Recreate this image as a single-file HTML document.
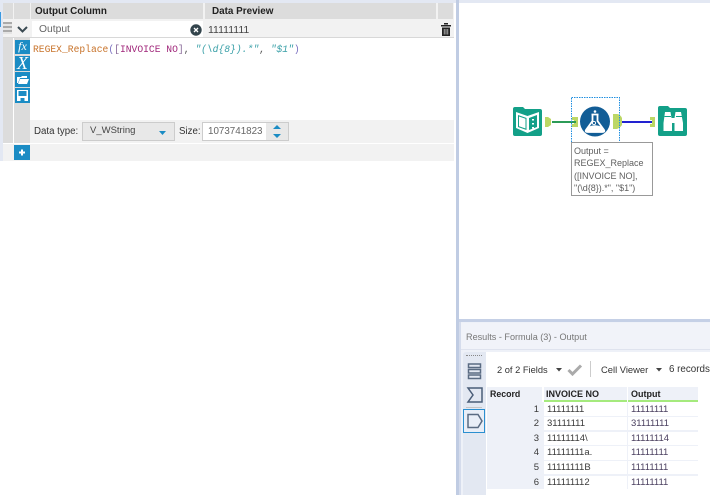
<!DOCTYPE html>
<html><head><meta charset="utf-8"><style>
html,body{margin:0;padding:0}
body{width:710px;height:495px;overflow:hidden;background:#fff;position:relative;font-family:"Liberation Sans",sans-serif;font-size:10px;color:#333}
.a{position:absolute;box-sizing:border-box;white-space:nowrap}
.b{font-weight:bold;color:#222}
.cell{position:absolute;background:#fff;line-height:14px;font-size:9.5px;color:#3a3a3a;padding-left:3px;box-sizing:border-box}
.r{background:#eef1f8;text-align:right;padding-right:3px;left:487px;width:55px}
.i{left:544px;width:83px}
.o{left:628px;width:70px;color:#4a3f5f}
.mono{font-family:"Liberation Mono",monospace;font-size:9.67px}
</style></head><body>
<div class="a" style="left:0;top:0;width:710px;height:3px;background:#e3e8f3"></div>
<div class="a" style="left:0;top:0;width:3px;height:161px;background:#e3e8f3"></div>
<div class="a" style="left:0;top:12px;width:1px;height:15px;background:#3a9ae0"></div>
<div class="a" style="left:3px;top:3px;width:451px;height:158px;background:#f2f2f2"></div>
<div class="a" style="left:3px;top:3px;width:10px;height:16px;background:#dcdcdc"></div>
<div class="a" style="left:14px;top:3px;width:16px;height:16px;background:#dcdcdc"></div>
<div class="a b" style="left:31px;top:3px;width:172px;height:16px;background:#dcdcdc;line-height:18px;padding-left:4px;font-size:9.9px">Output Column</div>
<div class="a b" style="left:205px;top:3px;width:231px;height:16px;background:#dcdcdc;line-height:18px;padding-left:7px;font-size:9.9px">Data Preview</div>
<div class="a" style="left:438px;top:3px;width:15px;height:16px;background:#dcdcdc"></div>
<div class="a" style="left:3px;top:22px;width:9px;height:12px;background:repeating-linear-gradient(#aaa 0 2px,#e4e4e4 2px 4px)"></div>
<svg class="a" style="left:16px;top:25px" width="13" height="9"><path d="M2 2l4.500 4.500L11 2" fill="none" stroke="#3a4a52" stroke-width="2"/></svg>
<div class="a" style="left:32px;top:21px;width:171px;height:16px;background:#fff;line-height:17px;padding-left:7px;color:#666;font-size:10.3px">Output</div>
<svg class="a" style="left:190px;top:24px" width="12" height="12"><circle cx="6" cy="6" r="5.700" fill="#33444c"/><path d="M4 4l4 4M8 4l-4 4" stroke="#fff" stroke-width="1.300"/></svg>
<div class="a" style="left:208px;top:21px;height:16px;line-height:18px;font-size:10.500px;color:#444">11111111</div>
<svg class="a" style="left:440px;top:22px" width="12" height="15"><path d="M4 2.500V1h4v1.500M1 3h10v1.500H1zM2 5.500h8V14H2z" fill="#222"/><path d="M4.200 7v5.500M6 7v5.500M7.800 7v5.500" stroke="#ddd" stroke-width=".7"/></svg>
<div class="a" style="left:3px;top:38px;width:451px;height:123px;background:#fff"></div>
<div class="a" style="left:3px;top:37px;width:451px;height:1px;background:#d8d8d8"></div>
<div class="a" style="left:3px;top:38px;width:10px;height:105px;background:#dcdcdc"></div>
<div class="a" style="left:14px;top:38px;width:16px;height:105px;background:#dcdcdc"></div>
<div class="a" style="left:15px;top:40px;width:15px;height:14px;background:#1b8cc4;color:#fff;font:italic 12px/13px 'Liberation Serif',serif;text-align:center">fx</div>
<div class="a" style="left:15px;top:56px;width:15px;height:15px;background:#1b8cc4;color:#fff;font:italic 18px/15px 'Liberation Serif',serif;text-align:center">X</div>
<div class="a" style="left:15px;top:72px;width:15px;height:15px;background:#1b8cc4"></div>
<svg class="a" style="left:15px;top:72px" width="15" height="15"><path d="M2 5h4l1-1h5v2H5L3 11H2zM5 7h9l-2 5H3z" fill="#fff"/></svg>
<div class="a" style="left:15px;top:88px;width:15px;height:15px;background:#1b8cc4"></div>
<svg class="a" style="left:15px;top:88px" width="15" height="15"><path d="M2 2h11v11H2z" fill="#fff"/><path d="M3.500 3h8v5h-8zM5.500 10h4v3h-4z" fill="#1b8cc4"/></svg>
<div class="a mono" style="left:33px;top:43px;height:14px;line-height:14px;color:#c8732a">REGEX_Replace<span style="color:#7a6fc0">(</span><span style="color:#8a6a9a">[</span><span style="color:#a0267a">INVOICE NO</span><span style="color:#8a6a9a">]</span><span style="color:#555">,</span> <span style="color:#3aa0a8;font-style:italic">"(\d{8}).*"</span><span style="color:#555">,</span> <span style="color:#3aa0a8;font-style:italic">"$1"</span><span style="color:#7a6fc0">)</span></div>
<div class="a" style="left:30px;top:120px;width:424px;height:23px;background:#f2f2f2"></div>
<div class="a" style="left:34px;top:120px;height:24px;line-height:24px;font-size:9.7px;color:#333">Data type:</div>
<div class="a" style="left:82px;top:122px;width:93px;height:19px;background:#e8e8e8;border:1px solid #ccc;line-height:16px;padding-left:7px;font-size:9.5px;color:#444">V_WString</div>
<svg class="a" style="left:158px;top:130px" width="9" height="6"><path d="M1 1h7L4.500 5z" fill="#1b8cc4"/></svg>
<div class="a" style="left:179px;top:120px;height:24px;line-height:24px;font-size:9.7px;color:#333">Size:</div>
<div class="a" style="left:202px;top:122px;width:87px;height:19px;background:#fff;border:1px solid #ccc;line-height:17px;padding-left:5px;font-size:9.8px;color:#666">1073741823</div>
<div class="a" style="left:266px;top:123px;width:22px;height:17px;background:#e8e8e8"></div>
<svg class="a" style="left:272px;top:124px" width="10" height="15"><path d="M1 5L5 1l4 4zM1 10h8l-4 4z" fill="#1b8cc4"/></svg>
<div class="a" style="left:3px;top:144px;width:451px;height:17px;background:#f2f2f2"></div>
<div class="a" style="left:14px;top:145px;width:16px;height:15px;background:#1b8cc4"></div>
<svg class="a" style="left:14px;top:145px" width="16" height="15"><path d="M5 7.500h6M8 4.500v6" stroke="#fff" stroke-width="2"/></svg>

<div class="a" style="left:456px;top:0;width:3px;height:495px;background:#c0cce3"></div>
<div class="a" style="left:459px;top:3px;width:251px;height:315px;background:#fff"></div>
<div class="a" style="left:459px;top:319px;width:251px;height:3px;background:#c5d0e6"></div>

<!-- tools -->
<svg class="a" style="left:505px;top:95px" width="205" height="100">
<path d="M8 14q0-2 2-2h8l2 2h15q2 0 2 2v23q0 2-2 2H10q-2 0-2-2z" fill="#13a088"/>
<path d="M11 17l11.500 4 11.500-4v16l-11.500 5-11.500-5z" fill="#fff"/><path d="M24 23l8-3v12l-8 3z" fill="#13a088"/>
<path d="M13 20l8.500 3v12l-8.500-3z" fill="#13a088"/><path d="M14 21.500l6.500 2.300v9.700l-6.500-2.300z" fill="#fff"/>
<path d="M28 24v1.500M28 28v1.500M28 32v1.500" stroke="#fff" stroke-width="2"/>
<path d="M47 27h26" stroke="#2c9b57" stroke-width="2"/>
<path d="M40 22h3l3 2v6l-3 2h-3z" fill="#bcd765"/>
<path d="M67 22h6v10h-6v-3h2v-4h-2z" fill="#bcd765"/>
<path d="M69 27h2" stroke="#2c9b57" stroke-width="2"/>
<path d="M117 27h30" stroke="#2222d0" stroke-width="2"/>
<path d="M108 19h4q3 0 5 4v7q-2 3-5 4h-4z" fill="#bcd765"/>
<path d="M145 22h5v10h-5v-3h2v-4h-2z" fill="#bcd765"/>
<path d="M153 13q0-2 2-2h8l2 2h15q2 0 2 2v24q0 2-2 2h-25q-2 0-2-2z" fill="#13a088"/>
<path d="M160 17h5.500l1 6h3l1-6h5.500l2 11v8h-8.500v-8h-2.500v8h-8.500v-8z" fill="#fff"/>
<path d="M159.500 21.500h6.500M171 21.500h6.500" stroke="#13a088" stroke-width="1"/>
<rect x="66.500" y="2.500" width="48" height="48" fill="none" stroke="#1f8fe0" stroke-dasharray="1.500 1" stroke-width="1"/>
<circle cx="90" cy="26.500" r="15" fill="#125d96"/>
<path d="M86.500 19.500h7M87.500 19.500v6.500l-6.500 9q-1 2 1.500 2h15q2.500 0 1.500-2l-6.500-9v-6.500z" fill="none" stroke="#fff" stroke-width="1.800"/>
<path d="M84 31.500q6-2.500 12 0l3.500 5h-19z" fill="#fff"/><circle cx="90" cy="16.500" r="1.300" fill="#fff"/><circle cx="89" cy="28" r="1.600" fill="none" stroke="#fff" stroke-width=".9"/>
</svg>
<div class="a" style="left:571px;top:142px;width:82px;height:54px;background:#fff;border:1px solid #999;padding:2px 0 0 2px;font-size:9px;line-height:12.4px;color:#5f5f5f;white-space:pre">Output =
REGEX_Replace
([INVOICE NO],
"(\d{8}).*", "$1")</div>

<!-- results -->
<div class="a" style="left:459px;top:322px;width:251px;height:173px;background:#eef1f8"></div>
<div class="a" style="left:459px;top:322px;width:2px;height:173px;background:#d5dcec"></div>
<div class="a" style="left:461px;top:323px;width:249px;height:27px;background:#f1f3f9;border-bottom:1px solid #dfe3ee"></div>
<div class="a" style="left:466px;top:325px;line-height:25px;font-size:9.1px;color:#777">Results - Formula (3) - Output</div>
<div class="a" style="left:463px;top:352px;width:23px;height:143px;background:#e3e8f2;border-radius:3px 0 0 0"></div>
<div class="a" style="left:466px;top:355px;width:16px;height:1px;border-top:1px dotted #888"></div>
<svg class="a" style="left:462px;top:360px" width="24" height="75">
<path d="M6.500 4h12v3.500h-12zM6.500 9.500h12v3.500h-12zM6.500 15h12v3.500h-12z" fill="none" stroke="#5a6b82" stroke-width="1.500"/>
<path d="M6 28h14v14H6l5-7z" fill="none" stroke="#4a5d78" stroke-width="1.500"/>
</svg>
<div class="a" style="left:466px;top:407px;width:16px;height:1px;background:#c5c5c5"></div>
<div class="a" style="left:463px;top:409px;width:22px;height:24px;border:1px solid #2b8fd0;background:#e9eef7"></div>
<svg class="a" style="left:463px;top:409px" width="22" height="24"><path d="M5 5.500h10l4 6.500-4 6.500H5z" fill="none" stroke="#5a6b82" stroke-width="1.500"/></svg>
<div class="a" style="left:486px;top:352px;width:224px;height:143px;background:#fff"></div>
<div class="a" style="left:497px;top:360px;line-height:20px;font-size:9.3px;color:#333">2 of 2 Fields</div>
<svg class="a" style="left:556px;top:368px" width="6" height="4"><path d="M0 0h6L3 3.500z" fill="#444"/></svg>
<svg class="a" style="left:567px;top:363px" width="16" height="13"><path d="M1.500 7l4 4L14 2.500" fill="none" stroke="#aaa" stroke-width="3"/></svg>
<div class="a" style="left:590px;top:361px;width:1px;height:16px;background:#ccc"></div>
<div class="a" style="left:601px;top:360px;line-height:20px;font-size:9.4px;color:#333">Cell Viewer</div>
<svg class="a" style="left:656px;top:368px" width="6" height="4"><path d="M0 0h6L3 3.500z" fill="#444"/></svg>
<div class="a" style="left:669px;top:360px;line-height:20px;font-size:9.8px;color:#333">6 records</div>

<div class="a" style="left:487px;top:402px;width:211px;height:87px;background:#eef1f8"></div>
<div class="a b" style="left:487px;top:387px;width:55px;height:15px;background:#eef1f8;line-height:15px;padding-left:3px;font-size:8.8px">Record</div>
<div class="a b" style="left:544px;top:387px;width:83px;height:15px;background:#eef1f8;border-bottom:2px solid #a5ea7d;line-height:15px;padding-left:2px;font-size:9px">INVOICE NO</div>
<div class="a b" style="left:628px;top:387px;width:70px;height:15px;background:#eef1f8;border-bottom:2px solid #a5ea7d;line-height:15px;padding-left:3px;font-size:9px">Output</div>

<div class="cell r" style="top:402px;height:14px;line-height:15px">1</div><div class="cell i" style="top:402px;height:14px;line-height:15px">11111111</div><div class="cell o" style="top:402px;height:14px;line-height:15px">11111111</div>
<div class="cell r" style="top:417px;height:13px">2</div><div class="cell i" style="top:417px;height:13px">31111111</div><div class="cell o" style="top:417px;height:13px">31111111</div>
<div class="cell r" style="top:432px;height:13px">3</div><div class="cell i" style="top:432px;height:13px">11111114\</div><div class="cell o" style="top:432px;height:13px">11111114</div>
<div class="cell r" style="top:446px;height:14px">4</div><div class="cell i" style="top:446px;height:14px">11111111a.</div><div class="cell o" style="top:446px;height:14px">11111111</div>
<div class="cell r" style="top:461px;height:13px">5</div><div class="cell i" style="top:461px;height:13px">11111111B</div><div class="cell o" style="top:461px;height:13px">11111111</div>
<div class="cell r" style="top:476px;height:13px">6</div><div class="cell i" style="top:476px;height:13px">111111112</div><div class="cell o" style="top:476px;height:13px">11111111</div>
</body></html>
